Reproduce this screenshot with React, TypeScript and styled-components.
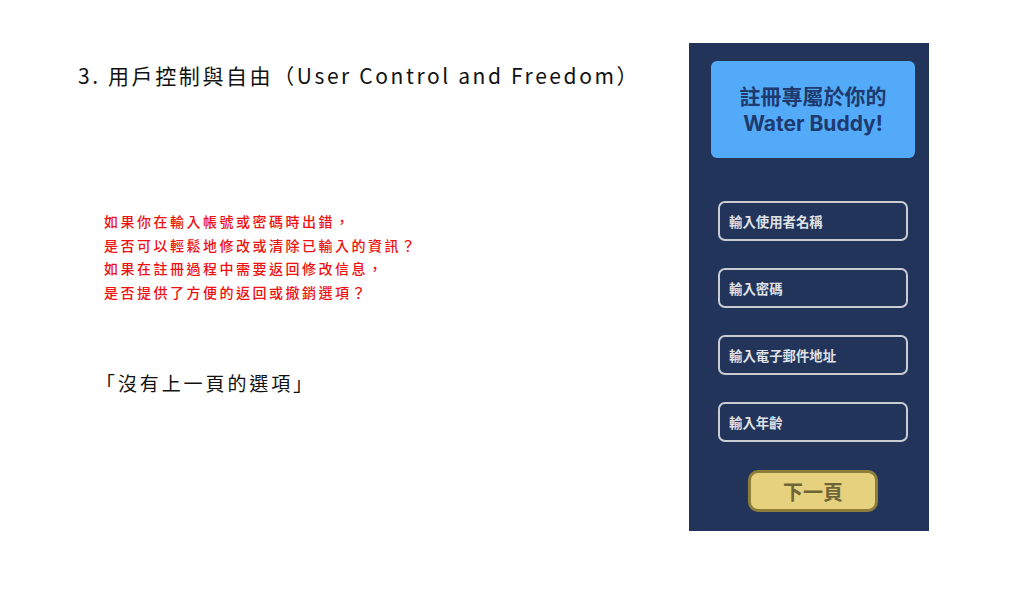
import React from "react";
import styled, { createGlobalStyle } from "styled-components";

const GlobalStyle = createGlobalStyle`
  html, body {
    margin: 0;
    padding: 0;
    background: #ffffff;
  }
  body {
    font-family: "Noto Sans CJK TC", "Noto Sans", sans-serif;
  }
`;

const Page = styled.div`
  display: flex;
  width: 1013px;
  height: 595px;
  background: #ffffff;
`;

const Slide = styled.div`
  display: flex;
  flex-direction: column;
  width: 689px;
  padding: 59px 0 0 78px;
  box-sizing: border-box;
`;

const Title = styled.h1`
  margin: 0;
  font-size: 21px;
  font-weight: 400;
  letter-spacing: 2.6px;
  line-height: 32px;
  color: #111111;
  white-space: nowrap;
`;

const Questions = styled.div`
  margin: 119px 0 0 26px;
  font-size: 14px;
  font-weight: 500;
  line-height: 23.5px;
  letter-spacing: 2.5px;
  color: #ee1111;
`;

const Remark = styled.p`
  margin: 66px 0 0 18px;
  font-size: 19px;
  line-height: 26px;
  letter-spacing: 2.9px;
  color: #111111;
`;

const Phone = styled.div`
  display: flex;
  flex-direction: column;
  align-items: center;
  width: 240px;
  height: 488px;
  margin-top: 43px;
  padding-top: 18px;
  box-sizing: border-box;
  background: #22345a;
`;

const Header = styled.div`
  display: flex;
  flex-direction: column;
  align-items: center;
  justify-content: center;
  width: 204px;
  height: 97px;
  margin-left: 8px;
  border-radius: 6px;
  background: #52aaf8;
  color: #1e3a6e;
  font-family: Inter, "Noto Sans CJK TC", sans-serif;
  font-weight: 700;
  font-size: 21px;
  line-height: 27px;
`;

const Fields = styled.div`
  display: flex;
  flex-direction: column;
  gap: 27px;
  margin-top: 43px;
  margin-left: 8px;
`;

const Field = styled.div`
  display: flex;
  align-items: center;
  width: 190px;
  height: 40px;
  padding-left: 9px;
  box-sizing: border-box;
  border: 2px solid #c9ccd3;
  border-radius: 7px;
  color: #dfe1e6;
  font-size: 13.4px;
  font-weight: 700;
`;

const NextButton = styled.button`
  width: 130px;
  height: 42px;
  margin-top: 28px;
  margin-left: 8px;
  border: 3px solid #8c7d3a;
  border-radius: 10px;
  background: #e6d27e;
  color: #6f6538;
  font-family: "Noto Sans CJK TC", sans-serif;
  font-size: 20px;
  font-weight: 700;
  padding: 0;
`;

const questions = [
  "如果你在輸入帳號或密碼時出錯，",
  "是否可以輕鬆地修改或清除已輸入的資訊？",
  "如果在註冊過程中需要返回修改信息，",
  "是否提供了方便的返回或撤銷選項？",
];

const fields = ["輸入使用者名稱", "輸入密碼", "輸入電子郵件地址", "輸入年齡"];

export default function App() {
  return (
    <Page>
      <GlobalStyle />
      <Slide>
        <Title>3. 用戶控制與自由（User Control and Freedom）</Title>
        <Questions>
          {questions.map((q) => (
            <div key={q}>{q}</div>
          ))}
        </Questions>
        <Remark>「沒有上一頁的選項」</Remark>
      </Slide>
      <Phone>
        <Header>
          <span>註冊專屬於你的</span>
          <span>Water Buddy!</span>
        </Header>
        <Fields>
          {fields.map((f) => (
            <Field key={f}>{f}</Field>
          ))}
        </Fields>
        <NextButton>下一頁</NextButton>
      </Phone>
    </Page>
  );
}
